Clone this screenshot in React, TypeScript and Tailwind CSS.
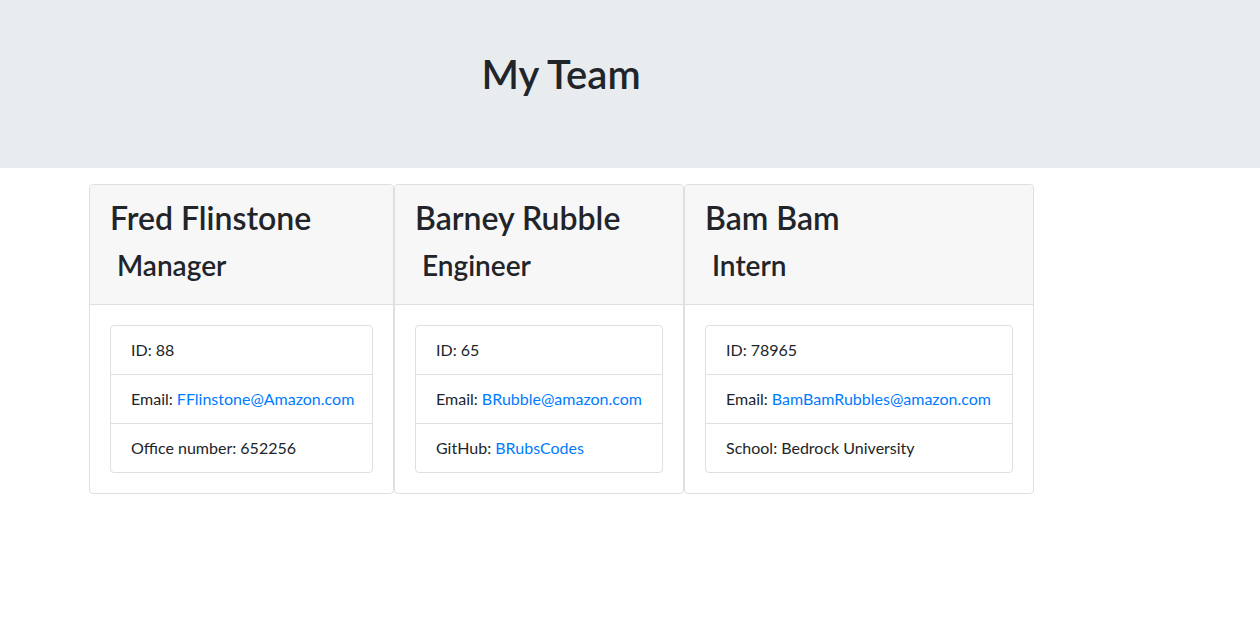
import React from "react";

interface Member {
  name: string;
  role: string;
  id: string;
  email: string;
  extraLabel: string;
  extraValue: string;
  extraLink?: boolean;
  width: string;
}

const team: Member[] = [
  { name: "Fred Flinstone", role: "Manager", id: "88", email: "FFlinstone@Amazon.com", extraLabel: "Office number", extraValue: "652256", width: "w-[305px]" },
  { name: "Barney Rubble", role: "Engineer", id: "65", email: "BRubble@amazon.com", extraLabel: "GitHub", extraValue: "BRubsCodes", extraLink: true, width: "w-[290px]" },
  { name: "Bam Bam", role: "Intern", id: "78965", email: "BamBamRubbles@amazon.com", extraLabel: "School", extraValue: "Bedrock University", width: "w-[350px]" },
];

const App: React.FC = () => {
  return (
    <div className="min-h-[640px] bg-white text-[#212529] font-['Lato',sans-serif]">
      {/* Jumbotron */}
      <div className="h-[168px] bg-[#e9ecef] pt-[50px]">
        <h1 className="w-[1122px] text-center text-[40px] leading-[48px] font-semibold">My Team</h1>
      </div>

      {/* Cards */}
      <div className="flex pl-[89px] pt-4">
        {team.map((m) => (
          <div key={m.id} className={`${m.width} border border-[#dfdfdf] rounded bg-white flex flex-col`}>
            <div className="bg-[#f7f7f7] border-b border-[#dfdfdf] px-5 pt-3 h-[120px] rounded-t">
              <h2 className="text-[32px] leading-[38px] font-semibold mt-[2px] mb-[11px]">{m.name}</h2>
              <h3 className="text-[28px] leading-[34px] font-semibold pl-[7px]">{m.role}</h3>
            </div>
            <div className="p-5">
              <ul className="border border-[#dfdfdf] rounded text-base leading-6 whitespace-nowrap">
                <li className="px-5 py-3">ID: {m.id}</li>
                <li className="px-5 py-3 border-t border-[#dfdfdf]">
                  Email: <a href="#" className="text-[#007bff]">{m.email}</a>
                </li>
                <li className="px-5 py-3 border-t border-[#dfdfdf]">
                  {m.extraLabel}:{" "}
                  {m.extraLink ? <a href="#" className="text-[#007bff]">{m.extraValue}</a> : m.extraValue}
                </li>
              </ul>
            </div>
          </div>
        ))}
      </div>
    </div>
  );
};

export default App;
